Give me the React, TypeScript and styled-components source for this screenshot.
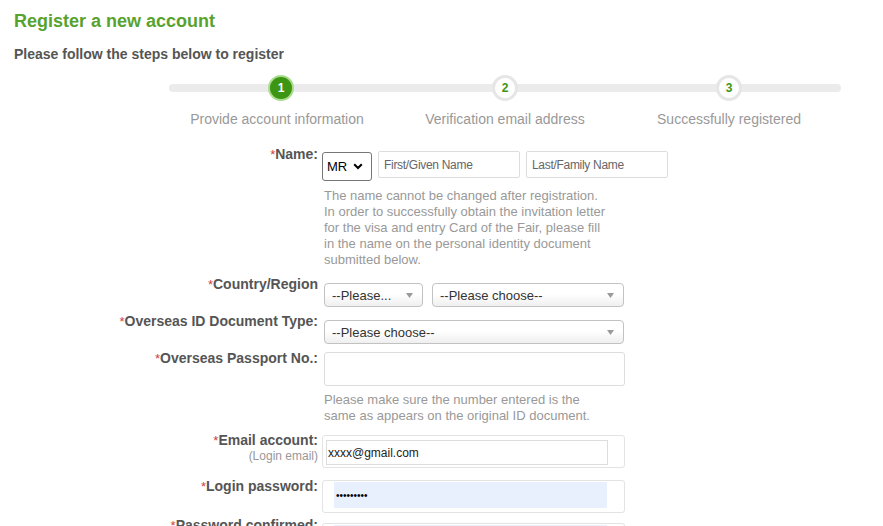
import React from 'react'
import styled, { createGlobalStyle, css } from 'styled-components'

const GlobalStyle = createGlobalStyle`
  body {
    margin: 0;
    background: #fff;
    font-family: "Liberation Sans", Arial, sans-serif;
    color: #555;
  }
  * { box-sizing: border-box; }
`

const steps = ['Provide account information', 'Verification email address', 'Successfully registered']

function Chevron() {
  return (
    <svg width="10" height="7" viewBox="0 0 10 7">
      <path d="M1.2 1.2 L5 5 L8.8 1.2" fill="none" stroke="#000" strokeWidth="2" />
    </svg>
  )
}

function Caret() {
  return (
    <svg width="7" height="5" viewBox="0 0 7 5">
      <path d="M0 0 H7 L3.5 5 Z" fill="#9a9a9a" />
    </svg>
  )
}

function Dropdown({ text, width }: { text: string; width: number }) {
  return (
    <Select style={{ width }}>
      <span>{text}</span>
      <Caret />
    </Select>
  )
}

export default function App() {
  return (
    <Page>
      <GlobalStyle />
      <Title>Register a new account</Title>
      <Subtitle>Please follow the steps below to register</Subtitle>

      <Stepper>
        <Track>
          {steps.map((s, i) => (
            <Dot key={s} $active={i === 0}>
              {i + 1}
            </Dot>
          ))}
        </Track>
        <StepLabels>
          {steps.map((s) => (
            <span key={s}>{s}</span>
          ))}
        </StepLabels>
      </Stepper>

      <Form>
        <Row $gap={0}>
          <Label>
            <Star>*</Star>Name:
          </Label>
          <Field $top={5}>
            <Inline>
              <TitleSelect>
                <span>MR</span>
                <Chevron />
              </TitleSelect>
              <TextInput placeholder="First/Given Name" />
              <TextInput placeholder="Last/Family Name" />
            </Inline>
            <Hint $top={7}>
              The name cannot be changed after registration. In order to successfully obtain the
              invitation letter for the visa and entry Card of the Fair, please fill in the name on
              the personal identity document submitted below.
            </Hint>
          </Field>
        </Row>

        <Row $gap={8}>
          <Label>
            <Star>*</Star>Country/Region
          </Label>
          <Field $top={7}>
            <Inline $gap={9}>
              <Dropdown text="--Please..." width={99} />
              <Dropdown text="--Please choose--" width={192} />
            </Inline>
          </Field>
        </Row>

        <Row $gap={6}>
          <Label>
            <Star>*</Star>Overseas ID Document Type:
          </Label>
          <Field $top={7}>
            <Dropdown text="--Please choose--" width={300} />
          </Field>
        </Row>

        <Row $gap={6}>
          <Label>
            <Star>*</Star>Overseas Passport No.:
          </Label>
          <Field $top={2}>
            <PassportInput />
            <Hint $top={6}>
              Please make sure the number entered is the same as appears on the original ID
              document.
            </Hint>
          </Field>
        </Row>

        <Row $gap={8}>
          <Label>
            <Star>*</Star>Email account:
            <SubLabel>(Login email)</SubLabel>
          </Label>
          <Field $top={3}>
            <InputShell $padLeft={3}>
              <EmailInput defaultValue="xxxx@gmail.com" />
            </InputShell>
          </Field>
        </Row>

        <Row $gap={10}>
          <Label>
            <Star>*</Star>Login password:
          </Label>
          <Field $top={2}>
            <InputShell $padLeft={11} $padTop={1}>
              <PasswordInput type="password" defaultValue="123456789" />
            </InputShell>
          </Field>
        </Row>

        <Row $gap={4}>
          <Label>
            <Star>*</Star>Password confirmed:
          </Label>
          <Field $top={6}>
            <InputShell $padLeft={11} $padTop={1}>
              <PasswordInput type="password" defaultValue="" />
            </InputShell>
          </Field>
        </Row>
      </Form>
    </Page>
  )
}

const Page = styled.div`
  padding: 10px 14px 0;
`

const Title = styled.h1`
  margin: 0;
  font-size: 18px;
  line-height: 22px;
  font-weight: bold;
  color: #58a22e;
`

const Subtitle = styled.h2`
  margin: 14px 0 0;
  font-size: 14px;
  line-height: 16px;
  font-weight: bold;
  color: #555;
`

const Stepper = styled.div`
  width: 672px;
  margin: 22px 0 0 155px;
`

const Track = styled.div`
  height: 8px;
  border-radius: 4px;
  background: #ebebeb;
  display: grid;
  grid-template-columns: repeat(3, 1fr);
  justify-items: center;
`

const Dot = styled.span<{ $active?: boolean }>`
  width: 26px;
  height: 26px;
  margin-top: -9px;
  border-radius: 50%;
  display: flex;
  align-items: center;
  justify-content: center;
  font-size: 12px;
  font-weight: bold;
  ${({ $active }) =>
    $active
      ? css`
          background: #3c9614;
          color: #fff;
          border: 2px solid #a9dc8c;
        `
      : css`
          background: #fff;
          color: #3c9614;
          border: 3px solid #e6e6e6;
        `}
`

const StepLabels = styled.div`
  margin-top: 19px;
  display: grid;
  grid-template-columns: repeat(3, 1fr);
  text-align: center;
  font-size: 14px;
  line-height: 16px;
  color: #999;

  & > span:first-child {
    margin-right: 8px;
  }
`

const Form = styled.div`
  margin-top: 19px;
`

const Row = styled.div<{ $gap: number }>`
  display: flex;
  align-items: flex-start;
  margin-top: ${({ $gap }) => $gap}px;
`

const Label = styled.div`
  width: 304px;
  flex: none;
  text-align: right;
  font-size: 14px;
  line-height: 16px;
  font-weight: bold;
  color: #555;
`

const Star = styled.span`
  color: #d0403c;
  font-weight: normal;
  font-size: 13px;
`

const SubLabel = styled.div`
  font-size: 12px;
  line-height: 14px;
  font-weight: normal;
  color: #999;
`

const Field = styled.div<{ $top: number }>`
  margin-left: 4px;
  padding-top: ${({ $top }) => $top}px;
  display: flex;
  flex-direction: column;
  align-items: flex-start;
`

const Inline = styled.div<{ $gap?: number }>`
  display: flex;
  align-items: flex-start;
  gap: ${({ $gap = 6 }) => $gap}px;
`

const TitleSelect = styled.div`
  width: 50px;
  height: 29px;
  margin-top: 1px;
  padding: 0 8px 0 4px;
  border: 1px solid #767676;
  border-radius: 3px;
  display: flex;
  align-items: center;
  justify-content: space-between;
  font-size: 13px;
  color: #000;
`

const TextInput = styled.input`
  width: 142px;
  height: 27px;
  padding: 0 5px;
  border: 1px solid #ddd;
  border-radius: 2px;
  font-family: inherit;
  font-size: 12px;
  letter-spacing: -0.3px;
  color: #333;
  outline: none;

  &::placeholder {
    color: #666;
  }
`

const Hint = styled.div<{ $top: number }>`
  width: 285px;
  margin: ${({ $top }) => $top}px 0 0 2px;
  font-size: 13px;
  line-height: 16px;
  color: #999;
`

const Select = styled.div`
  height: 24px;
  margin-left: 2px;
  padding: 0 9px 0 7px;
  border: 1px solid #c2c2c2;
  border-radius: 4px;
  background: linear-gradient(#fff 45%, #efefef);
  display: flex;
  align-items: center;
  justify-content: space-between;
  font-size: 13px;
  color: #333;

  & + & {
    margin-left: 0;
  }
`

const PassportInput = styled.input`
  width: 301px;
  height: 34px;
  margin-left: 2px;
  border: 1px solid #ddd;
  border-radius: 3px;
  outline: none;
`

const InputShell = styled.div<{ $padLeft: number; $padTop?: number }>`
  width: 303px;
  height: 33px;
  padding: ${({ $padTop = 4 }) => $padTop}px 0 0 ${({ $padLeft }) => $padLeft}px;
  border: 1px solid #e3e3e3;
  border-radius: 3px;
`

const EmailInput = styled.input`
  width: 282px;
  height: 25px;
  padding: 0 0 0 1px;
  border: 1px solid #ddd;
  font-family: inherit;
  font-size: 12px;
  color: #222;
  outline: none;
`

const PasswordInput = styled.input`
  width: 273px;
  height: 26px;
  padding: 0 2px;
  border: none;
  background: #e8f0fe;
  font-family: inherit;
  font-size: 10px;
  color: #000;
  outline: none;
`
